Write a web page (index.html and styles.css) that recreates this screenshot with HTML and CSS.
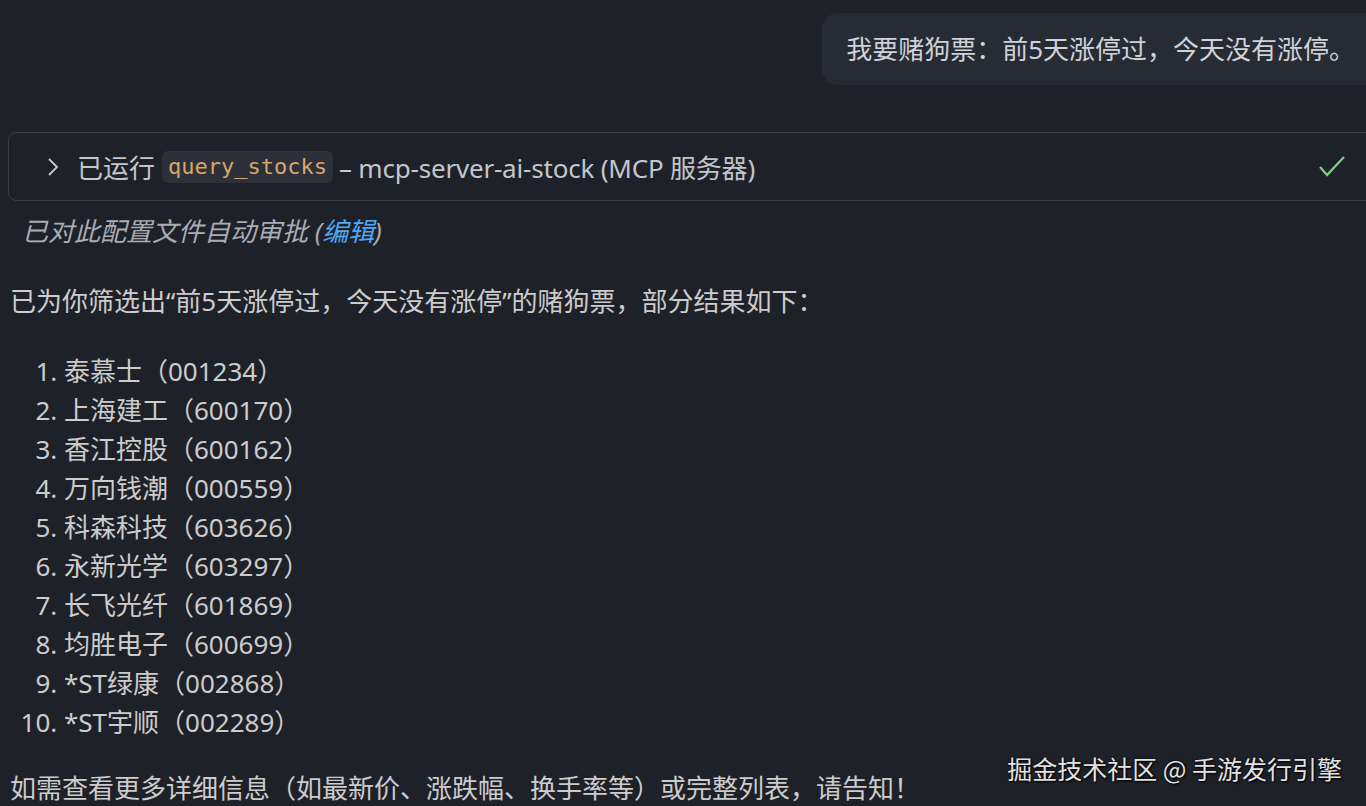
FILE: index.html
```html
<!DOCTYPE html>
<html lang="zh-CN">
<head>
<meta charset="utf-8">
<title>Chat</title>
<link rel="stylesheet" href="styles.css">
</head>
<body>
<div class="chat">
  <div class="user-row">
    <div class="bubble">我要赌狗票：前5天涨停过，今天没有涨停。</div>
  </div>

  <div class="tool">
    <svg class="chev" width="12" height="20" viewBox="0 0 12 20"><path d="M2 2 L10 10 L2 18" fill="none" stroke="#c8cbd0" stroke-width="1.8"/></svg>
    <span class="tool-label">已运行</span>
    <code class="chip">query_stocks</code>
    <span class="tool-rest">– mcp-server-ai-stock (MCP 服务器)</span>
    <svg class="check" width="28" height="24" viewBox="0 0 28 24"><path d="M2 12 L9 20 L26 2" fill="none" stroke="#7ccf8a" stroke-width="2.2"/></svg>
  </div>

  <div class="approve">已对此配置文件自动审批 (<a class="edit">编辑</a>)</div>

  <p class="para">已为你筛选出“前5天涨停过，今天没有涨停”的赌狗票，部分结果如下：</p>

  <ol class="list">
    <li>泰慕士（001234）</li>
    <li>上海建工（600170）</li>
    <li>香江控股（600162）</li>
    <li>万向钱潮（000559）</li>
    <li>科森科技（603626）</li>
    <li>永新光学（603297）</li>
    <li>长飞光纤（601869）</li>
    <li>均胜电子（600699）</li>
    <li>*ST绿康（002868）</li>
    <li>*ST宇顺（002289）</li>
  </ol>

  <p class="para last">如需查看更多详细信息（如最新价、涨跌幅、换手率等）或完整列表，请告知！</p>
</div>
<div class="watermark">掘金技术社区 @ 手游发行引擎</div>
</body>
</html>
```

FILE: styles.css
```css
html, body {
  margin: 0;
  padding: 0;
  background: #1f2128;
  overflow: hidden;
  height: 806px;
}
body {
  font-family: "Noto Sans", "Noto Sans CJK SC", sans-serif;
  font-size: 26px;
  color: #cccccc;
  position: relative;
}
.chat {
  padding: 13px 0 0 8px;
}
.user-row {
  display: flex;
  justify-content: flex-end;
}
.bubble {
  background: #272b33;
  border-radius: 16px;
  margin-right: -24px;
  padding: 16px 35px 16px 24px;
  line-height: 40px;
  color: #cfd2d8;
}
.tool {
  margin-top: 47px;
  margin-right: -20px;
  height: 67px;
  border: 1px solid #3a3d44;
  border-radius: 8px;
  display: flex;
  align-items: center;
  padding: 0 39px 0 38px;
  color: #c3c6cc;
}
.chev {
  flex: none;
  margin-right: 18px;
}
.tool-label {
  margin-right: 7px;
}
.chip {
  font-family: "DejaVu Sans Mono", monospace;
  font-size: 22px;
  color: #d9a66c;
  background: #2c3038;
  border-radius: 6px;
  padding: 4px 6px;
  line-height: 24px;
}
.tool-rest {
  margin-left: 6px;
  letter-spacing: -0.2px;
}
.check {
  margin-left: auto;
  flex: none;
}
.approve {
  margin-top: 11px;
  padding-left: 14px;
  font-style: italic;
  color: #a9acb2;
  line-height: 39px;
}
.edit {
  color: #4ea9f5;
}
.para {
  margin: 31px 0 0 2px;
  line-height: 39px;
}
.list {
  margin: 31px 0 0 0;
  padding-left: 56px;
  line-height: 39px;
}
.para.last {
  margin-top: 27px;
}
.watermark {
  position: absolute;
  right: 24px;
  top: 748px;
  font-family: "Noto Sans CJK SC", sans-serif;
  font-size: 25px;
  line-height: 40px;
  color: #e2e2e2;
  text-shadow: 0 0 2px #000, 1px 1px 2px #000;
}
```
